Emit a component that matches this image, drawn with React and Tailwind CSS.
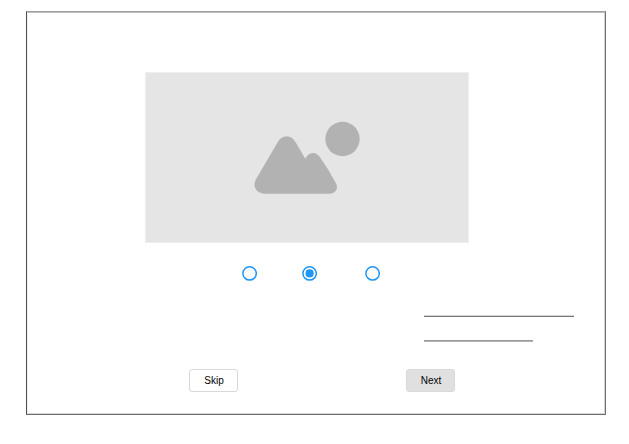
function Radio({ checked }) {
  return (
    <svg className="block h-4 w-4" viewBox="0 0 16 16" role="radio" aria-checked={!!checked}>
      <circle cx="8.6" cy="8.4" r="6.7" fill={checked ? "#ffffff" : "#fafafa"} stroke="#2196f3" strokeWidth="1.5" />
      {checked && <circle cx="8.6" cy="8.4" r="4.1" fill="#2196f3" />}
    </svg>
  );
}

function ImagePlaceholder() {
  return (
    <div className="mt-[59px] ml-[117px] flex h-[171px] w-[324px] border border-[#eeeeee] bg-[#e5e5e5]">
      <svg className="mt-[37px] ml-[99px] block h-[90px] w-[125px]" viewBox="0 0 375 270" fill="#b2b2b2">
        <circle cx="292.5" cy="87" r="51.5" />
        <path d="M98 97C110 73 140 73 152 97L181 146C191 124 215 123 226 143Q250 177 272 218C282 235 272 251 254 251H59C34 251 22 230 32 209Z" />
      </svg>
    </div>
  );
}

export default function App() {
  return (
    <main className="h-[444px] w-[629px] bg-white pt-[11px] pl-[26px] font-['Liberation_Sans',Arial,sans-serif] text-black">
      <section className="h-[404px] w-[580px] border border-t-[#a0a0a0] border-r-[#707070] border-b-[#707070] border-l-[#4d4d4d]">
        <div className="flex h-full flex-col border border-t-[#bbbbbb] border-r-[#d4d4d4] border-b-[#d4d4d4] border-l-[#f2f2f2]">
          <ImagePlaceholder />
          <div className="mt-[22px] ml-[213px] flex">
            <Radio />
            <div className="ml-11"><Radio checked /></div>
            <div className="ml-[47px]"><Radio /></div>
          </div>
          <div className="mt-[34px] ml-[396px] h-0.5 w-[150px] border-t border-b border-t-[#d4d4d4] border-b-[#777777]" />
          <div className="mt-[23px] ml-[396px] h-0.5 w-[109px] border-t border-b border-t-[#999999] border-b-[#b5b5b5]" />
          <div className="mt-[27px] ml-[161px] flex gap-[168px] text-[10px] leading-[21px]">
            <button className="h-[23px] w-[49px] rounded-[3px] border border-[#d9d9d9] bg-white pl-px">Skip</button>
            <button className="h-[23px] w-[49px] rounded-[3px] border border-[#d9d9d9] bg-[#e0e0e0] pl-px">Next</button>
          </div>
        </div>
      </section>
    </main>
  );
}
